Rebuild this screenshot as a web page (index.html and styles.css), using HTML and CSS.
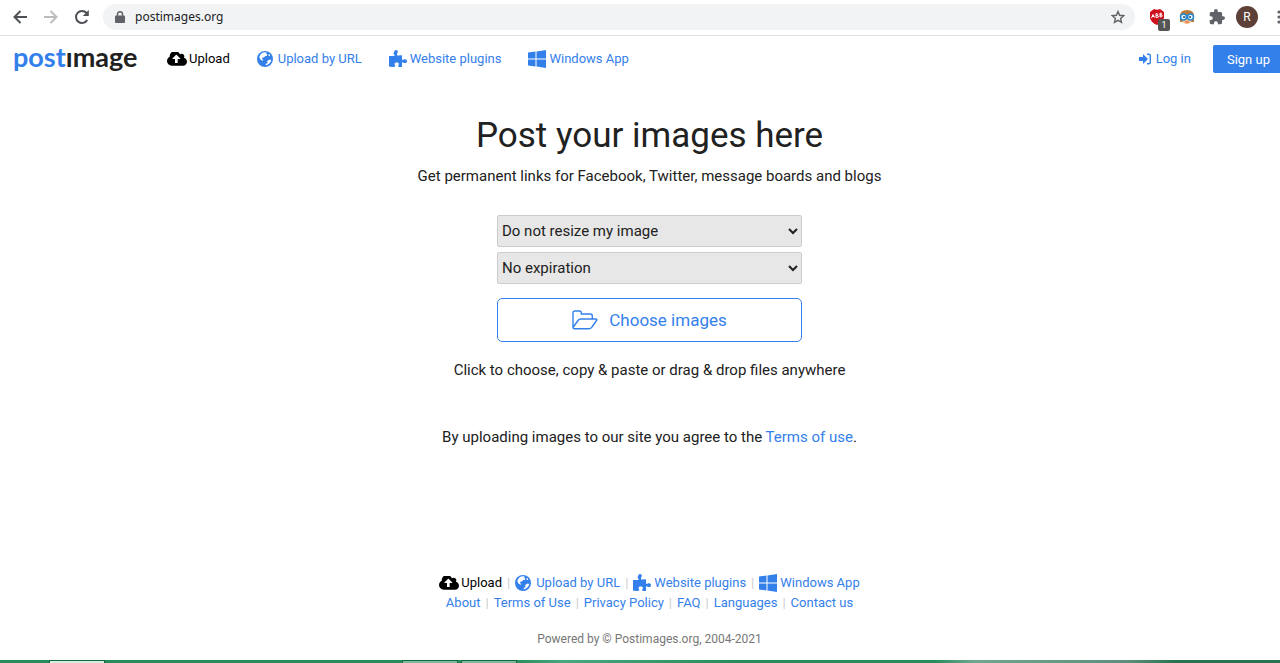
FILE: index.html
```
<!DOCTYPE html>
<html lang="en">
<head>
    <meta charset="UTF-8">
    <meta name="viewport" content="width=device-width, initial-scale=1.0">
    <title>Postimages</title>
    <link rel="stylesheet" href="styles.css">
</head>
<body>
    <!-- Shared icons -->
    <svg class="sprite" aria-hidden="true">
        <symbol id="i-cloud" viewBox="-64 256 1920 1280">
            <path d="M1216 864q0-14-9-23l-352-352q-9-9-23-9t-23 9l-351 351q-10 12-10 24 0 14 9 23t23 9h224v352q0 13 9.500 22.500t22.500 9.500h192q13 0 22.500-9.500t9.500-22.500v-352h224q13 0 22.500-9.500t9.500-22.500zm640 288q0 159-112.500 271.500t-271.500 112.500h-1088q-185 0-316.500-131.500t-131.500-316.500q0-130 70-240t188-165q-2-30-2-43 0-212 150-362t362-150q156 0 285.500 87t188.500 231q71-62 166-62 106 0 181 75t75 181q0 76-41 138 130 31 213.500 135.500t83.500 238.500z"/>
        </symbol>
        <symbol id="i-globe" viewBox="0 0 16 16">
            <circle cx="8" cy="8" r="8"/>
            <path fill="#fff" d="M3.600 3.200L5.500 1.800L7.500 1.300L9.800 1.500L9 3L10.300 3.300L9.800 5L8.600 4.800L6.800 6.500L5.600 6.500L5 8L6.300 9L5.600 9.800L3.300 8.600L2.300 6zM12 2.800L13.300 4.300L12.300 5.200L11.400 4.200zM11 9.400L12.500 8.400L14.300 9L13.600 11L12 12.800L10 13.900L8.500 14.200L9 12.800L10.800 12L10 10.500z"/>
        </symbol>
        <symbol id="i-puzzle" viewBox="0 0 18 19">
            <path d="M0 6h4.800c1 0 1-.7.500-1.400C4.200 4 4.300 2.900 5.200 2C5.300.800 6 0 7 0c1.300 0 2 .9 1.800 2.100C8.600 3.200 7.900 3.600 8 4.700c.1.800.7.900 1.400.9L13 5.300V8.800c0 1.200.5 1.300 1.300.9C15.800 8.900 18 9.500 18 11.200c0 1.800-2 2.400-3.500 1.500c-.9-.6-1.500-.5-1.500.6V17c-1.300.1-3.300.1-3.700-.5c-.7-1.100.8-1.400.6-2.700c-.2-1-1.100-1.400-2.200-1.400c-1.300 0-2.100.6-2.200 1.600c-.1 1.200 1.300 1.500.6 2.500C5 17.200 1.700 17.100 0 16.500z"/>
        </symbol>
        <symbol id="i-windows" viewBox="0 0 18 18">
            <path d="M0 2.600L7.500 1.500V8.500H0zM8.500 1.400L18 0V8.500H8.500zM0 9.500H7.500V16.500L0 15.400zM8.500 9.500H18V18L8.500 16.600z"/>
        </symbol>
    </svg>

    <div class="browser-bar">
        <button class="tool" type="button" aria-label="Back">
            <svg width="16" height="16" viewBox="0 0 16 16"><path d="M15 8H2.500M8.500 2L2.500 8l6 6"/></svg>
        </button>
        <button class="tool tool-off" type="button" aria-label="Forward">
            <svg width="16" height="16" viewBox="0 0 16 16"><path d="M1 8h12.500M7.500 2l6 6l-6 6"/></svg>
        </button>
        <button class="tool" type="button" aria-label="Reload">
            <svg width="16" height="16" viewBox="0 0 16 16"><path d="M13.200 11A6 6 0 1 1 12.500 4"/><path class="solid" d="M14.800 1v6h-6z"/></svg>
        </button>
        <div class="address">
            <svg width="10" height="12" viewBox="0 0 10 12"><path fill="#5f6368" d="M1 4.500h8q1 0 1 1V11q0 1-1 1H1q-1 0-1-1V5.500q0-1 1-1z"/><path fill="none" stroke="#5f6368" stroke-width="1.400" d="M2.500 5V3a2.500 2.300 0 0 1 5 0v2"/></svg>
            <input class="url" type="text" aria-label="Address" value="postimages.org">
            <svg width="14" height="14" viewBox="0 0 14 14"><path fill="none" stroke="#5f6368" stroke-width="1.400" d="M7 1.500l1.600 3.800l4.100.4l-3.100 2.700l.9 4L7 10.300l-3.500 2.100l.9-4L1.300 5.700l4.100-.4z"/></svg>
        </div>
        <div class="extensions">
            <span class="ext">
                <svg width="16" height="16" viewBox="0 0 16 16"><path fill="#d00f1c" d="M5 0Q8 1.500 11 0L15 3V9Q13 13.500 8 16Q2 13.500 1 9V3z"/><path fill="none" stroke="#fff" d="M2.500 9L4 5.500L5.500 8.500M3 7.500h2M7 4.500v4q3 0 2.500-1.300Q9.500 6.500 7 6.500Q9 6 8.800 5.200Q8.700 4.500 7 4.500M11 4v4q2.500 0 2.300-1.500Q13.200 6 11 6q2 0 1.800-1.200Q12.700 4 11 4"/></svg>
                <span class="badge">1</span>
            </span>
            <svg width="16" height="16" viewBox="0 0 16 16"><path fill="#b87a3a" d="M1 7Q1 1 8 1t7 6v6H1z"/><path fill="#f5c08a" d="M3 6h10v5q-1 4-5 4t-5-4z"/><circle cx="4.500" cy="8" r="3" fill="#e4f2fc" stroke="#2586d0" stroke-width="1.500"/><circle cx="11.500" cy="8" r="3" fill="#e4f2fc" stroke="#2586d0" stroke-width="1.500"/><circle cx="5" cy="8" r="1" fill="#1d5078"/><circle cx="11" cy="8" r="1" fill="#1d5078"/><path stroke="#d63c2c" d="M6.500 13h3"/></svg>
            <svg width="16" height="16" viewBox="1 1 22 22"><path fill="#5f6368" d="M20.500 11H19V7c0-1.100-.9-2-2-2h-4V3.500a2.500 2.500 0 0 0-5 0V5H4c-1.100 0-2 .9-2 2v3.800h1.500a2.700 2.700 0 0 1 0 5.400H2V20c0 1.100.9 2 2 2h3.800v-1.500a2.700 2.700 0 0 1 5.400 0V22H17c1.100 0 2-.9 2-2v-4h1.500a2.500 2.500 0 0 0 0-5z"/></svg>
            <span class="avatar">R</span>
            <svg width="4" height="16" viewBox="0 0 4 16" fill="#5f6368"><circle cx="2" cy="3" r="1.600"/><circle cx="2" cy="8" r="1.600"/><circle cx="2" cy="13" r="1.600"/></svg>
        </div>
    </div>

    <div class="page">
        <header class="site-header">
            <a class="logo" href="#"><span class="logo-post">post</span>ımage</a>
            <nav class="menu">
                <a class="link active" href="#"><svg class="i-cloud"><use href="#i-cloud"/></svg>Upload</a>
                <a class="link" href="#"><svg class="i-globe"><use href="#i-globe"/></svg>Upload by URL</a>
                <a class="link" href="#"><svg class="i-puzzle"><use href="#i-puzzle"/></svg>Website plugins</a>
                <a class="link" href="#"><svg class="i-windows"><use href="#i-windows"/></svg>Windows App</a>
            </nav>
            <div class="account">
                <a class="link" href="#"><svg class="i-login" viewBox="0 0 12 12"><path d="M0 4h4V1l5 5l-5 5V8H0z"/><path fill="none" stroke="#3480eb" stroke-width="1.400" d="M8 1.200h1.800q1.500 0 1.500 1.500v6.600q0 1.500-1.500 1.500H8"/></svg>Log in</a>
                <button class="signup" type="button">Sign up</button>
            </div>
        </header>

        <main class="upload">
            <h1>Post your images here</h1>
            <p class="lead">Get permanent links for Facebook, Twitter, message boards and blogs</p>
            <form class="upload-form">
                <select aria-label="Image size">
                    <option>Do not resize my image</option>
                </select>
                <select aria-label="Expiration">
                    <option>No expiration</option>
                </select>
                <button class="choose" type="button">
                    <svg width="26" height="20" viewBox="0 0 26 20"><path d="M1 17V3Q1 1 3 1h4.500q1.800 0 1.800 2v1h9q2 0 2 2v3M1 17.500L6 10.500Q7 9 9 9h15q1.500 0 .5 1.500L20 17q-1 1.700-3 1.700H2.500Q1 18.700 1 17"/></svg>
                    Choose images
                </button>
            </form>
            <p class="hint">Click to choose, copy &amp; paste or drag &amp; drop files anywhere</p>
            <p class="terms">By uploading images to our site you agree to the <a href="#">Terms of use</a>.</p>
        </main>

        <footer class="site-footer">
            <nav class="footer-links">
                <a class="link active" href="#"><svg class="i-cloud"><use href="#i-cloud"/></svg>Upload</a>
                <a class="link" href="#"><svg class="i-globe"><use href="#i-globe"/></svg>Upload by URL</a>
                <a class="link" href="#"><svg class="i-puzzle"><use href="#i-puzzle"/></svg>Website plugins</a>
                <a class="link" href="#"><svg class="i-windows"><use href="#i-windows"/></svg>Windows App</a>
            </nav>
            <nav class="footer-links">
                <a class="link" href="#">About</a>
                <a class="link" href="#">Terms of Use</a>
                <a class="link" href="#">Privacy Policy</a>
                <a class="link" href="#">FAQ</a>
                <a class="link" href="#">Languages</a>
                <a class="link" href="#">Contact us</a>
            </nav>
            <p class="copyright">Powered by © Postimages.org, 2004-2021</p>
        </footer>
    </div>

    <div class="taskbar">
        <span class="task task-active"></span>
        <span class="task"></span>
        <span class="task"></span>
    </div>
</body>
</html>
```
FILE: styles.css
```
* {
    box-sizing: border-box;
}

body {
    margin: 0;
    min-height: 100vh;
    display: flex;
    flex-direction: column;
    overflow: hidden;
    background: #fff;
    color: #212121;
    font-family: Roboto, Arial, sans-serif;
    font-size: 15px;
    line-height: 20px;
}

a {
    color: #3480eb;
    text-decoration: none;
}

p {
    margin: 0;
}

button {
    font-family: inherit;
    cursor: pointer;
}

svg {
    flex: none;
}

.sprite {
    position: absolute;
    width: 0;
    height: 0;
}

/* Browser bar */
.browser-bar {
    display: flex;
    align-items: center;
    height: 36px;
    padding: 0 0 1px 12px;
    border-bottom: 1px solid #dfe1e5;
}

.tool {
    display: flex;
    width: 16px;
    margin-right: 15px;
    padding: 0;
    border: 0;
    background: none;
}

.tool path {
    fill: none;
    stroke: #4d5156;
    stroke-width: 2;
}

.tool .solid {
    fill: #4d5156;
    stroke: none;
}

.tool-off path {
    stroke: #babcbe;
}

.address {
    display: flex;
    align-items: center;
    flex: 1;
    gap: 10px;
    height: 26px;
    margin-left: -2px;
    padding: 0 10px 0 12px;
    border-radius: 13px;
    background: #f1f3f4;
}

.url {
    flex: 1;
    padding: 0;
    border: 0;
    outline: none;
    background: none;
    color: #202124;
    font: 12px/20px "Noto Sans", sans-serif;
}

.extensions {
    display: flex;
    align-items: center;
    gap: 14px;
    margin-right: -1px;
    padding-left: 14px;
}

.ext {
    display: flex;
    position: relative;
}

.badge {
    position: absolute;
    left: 9px;
    top: 10px;
    width: 12px;
    height: 12px;
    border-radius: 2px;
    background: #555;
    color: #fff;
    font-size: 9px;
    line-height: 12px;
    text-align: center;
}

.avatar {
    width: 22px;
    height: 22px;
    margin: 0 5px 0 -3px;
    border-radius: 50%;
    background: #5d4037;
    color: #fff;
    font-size: 12px;
    line-height: 22px;
    text-align: center;
}

/* The page is a bit wider than the window and runs off its right edge */
.page {
    display: flex;
    flex-direction: column;
    flex: 1;
    margin-right: -19px;
}

.site-header {
    display: flex;
    align-items: center;
    height: 46px;
    padding: 0 15px 0 13px;
}

.logo {
    width: 154px;
    padding-bottom: 5px;
    color: #212121;
    font: bold 27px/30px Lato, sans-serif;
    font-variant-ligatures: none;
}

.logo-post {
    color: #3480eb;
}

.menu {
    display: flex;
    gap: 27px;
}

.link {
    display: flex;
    align-items: center;
    font-size: 13px;
    fill: #3480eb;
}

.active {
    color: #000;
    fill: #000;
}

.i-cloud {
    width: 20px;
    height: 14px;
    margin-right: 2px;
}

.i-globe {
    width: 16px;
    height: 16px;
    margin-right: 5px;
}

.i-puzzle {
    width: 18px;
    height: 19px;
    margin-right: 3px;
}

.i-windows {
    width: 18px;
    height: 18px;
    margin-right: 3px;
}

.i-login {
    width: 12px;
    height: 12px;
    margin-right: 5px;
}

.account {
    display: flex;
    align-items: center;
    gap: 22px;
    margin-left: auto;
}

.signup {
    height: 28px;
    padding: 0 14px;
    border: 0;
    border-radius: 2px;
    background: #3480eb;
    color: #fff;
    font-size: 13px;
}

/* Upload form */
.upload {
    display: flex;
    flex-direction: column;
    align-items: center;
    padding-top: 32px;
}

h1 {
    margin: 0;
    font-size: 35px;
    font-weight: 400;
    line-height: 44px;
}

.lead {
    margin-top: 8px;
}

.upload-form {
    display: flex;
    flex-direction: column;
    gap: 5px;
    width: 305px;
    margin-top: 29px;
}

select {
    height: 32px;
    padding: 0;
    border: 1px solid #ccc;
    border-radius: 2px;
    background: #e7e7e7;
    color: #212121;
    font: 15px Roboto, Arial, sans-serif;
}

.choose {
    display: flex;
    align-items: center;
    justify-content: center;
    gap: 11px;
    height: 44px;
    margin-top: 9px;
    border: 1px solid #3480eb;
    border-radius: 5px;
    background: #fff;
    color: #3480eb;
    font-size: 17px;
}

.choose path {
    fill: none;
    stroke: #3480eb;
    stroke-width: 1.4;
}

.hint {
    margin-top: 18px;
}

.terms {
    margin-top: 47px;
}

/* Footer */
.site-footer {
    display: flex;
    flex-direction: column;
    align-items: center;
    margin-top: auto;
    padding-bottom: 11px;
}

.footer-links {
    display: flex;
}

.footer-links .link {
    height: 20px;
}

.footer-links .link + .link::before {
    content: "|";
    margin: 0 5px;
    color: #ccc;
}

.copyright {
    margin-top: 16px;
    color: #777;
    font-size: 12px;
}

/* Edge of the desktop taskbar */
.taskbar {
    display: flex;
    height: 3px;
    padding-left: 49px;
    background: linear-gradient(90deg, #268c5a 0 40%, #48a87c 44%, #268c5a 58% 73%, #6fa78f 76%, #5d8f7c 88%, #26734d 92%);
}

.task {
    width: 56px;
    margin-right: 3px;
    border: 1px solid #17683f;
    border-bottom: 0;
    background: #7dba9b;
}

.task-active {
    margin-right: 297px;
    background: #d5eee0;
}
```
